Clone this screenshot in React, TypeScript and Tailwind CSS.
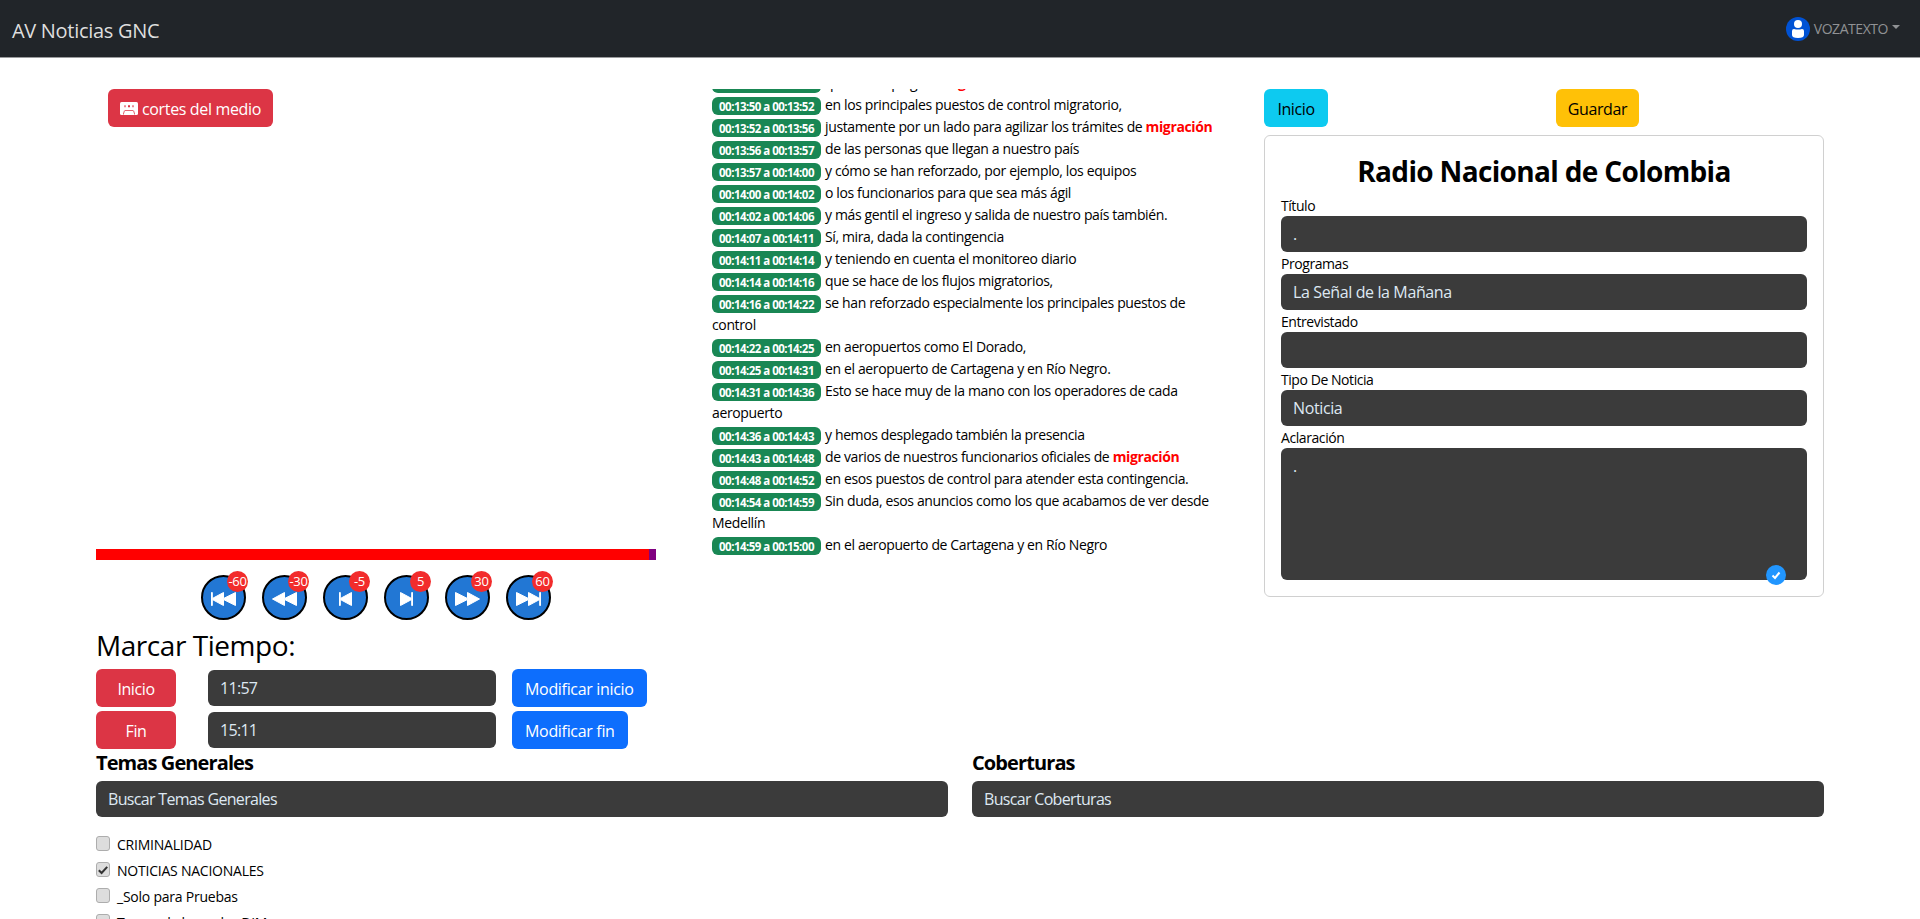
import { ReactNode } from "react";

const cues: [string, ReactNode][] = [
  ["00:13:48 a 00:13:50", <>que se desplegará <b className="text-[#ff0000]">migración</b></>],
  ["00:13:50 a 00:13:52", "en los principales puestos de control migratorio,"],
  ["00:13:52 a 00:13:56", <>justamente por un lado para agilizar los trámites de <b className="text-[#ff0000]">migración</b></>],
  ["00:13:56 a 00:13:57", "de las personas que llegan a nuestro país"],
  ["00:13:57 a 00:14:00", "y cómo se han reforzado, por ejemplo, los equipos"],
  ["00:14:00 a 00:14:02", "o los funcionarios para que sea más ágil"],
  ["00:14:02 a 00:14:06", "y más gentil el ingreso y salida de nuestro país también."],
  ["00:14:07 a 00:14:11", "Sí, mira, dada la contingencia"],
  ["00:14:11 a 00:14:14", "y teniendo en cuenta el monitoreo diario"],
  ["00:14:14 a 00:14:16", "que se hace de los flujos migratorios,"],
  ["00:14:16 a 00:14:22", <>se han reforzado especialmente los principales puestos de<br />control</>],
  ["00:14:22 a 00:14:25", "en aeropuertos como El Dorado,"],
  ["00:14:25 a 00:14:31", "en el aeropuerto de Cartagena y en Río Negro."],
  ["00:14:31 a 00:14:36", <>Esto se hace muy de la mano con los operadores de cada<br />aeropuerto</>],
  ["00:14:36 a 00:14:43", "y hemos desplegado también la presencia"],
  ["00:14:43 a 00:14:48", <>de varios de nuestros funcionarios oficiales de <b className="text-[#ff0000]">migración</b></>],
  ["00:14:48 a 00:14:52", "en esos puestos de control para atender esta contingencia."],
  ["00:14:54 a 00:14:59", <>Sin duda, esos anuncios como los que acabamos de ver desde<br />Medellín</>],
  ["00:14:59 a 00:15:00", "en el aeropuerto de Cartagena y en Río Negro"],
];

const seeks = [
  { label: "-60", d: "M.5 .5h.8v6L12.500 .5v6L24.500 .5v13l-12-6v6L1.300 7.500v6H.5z" },
  { label: "-30", d: "M12.500 .5v6L24.500 .5v13l-12-6v6L.5 7z" },
  { label: "-5", d: "M6.500 .5h.8v6L18.500 .5v13L7.300 7.500v6h-.8z" },
  { label: "5", d: "M18.500 .5h-.8v6L6.500 .5v13l11.200-6v6h.8z" },
  { label: "30", d: "M12.500 .5v6L.5 .5v13l12-6v6L24.500 7z" },
  { label: "60", d: "M24.500 .5h-.8v6L12.500 .5v6L.5 .5v13l12-6v6l11.200-6v6h.8z" },
];

function Field({ label, value }: { label: string; value: string }) {
  return (
    <div className="mb-[1px]">
      <div className="h-[21px] text-sm leading-[21px] tracking-[-0.44px]">{label}</div>
      <div className="h-9 rounded-md bg-[#3b3b3b] px-3 leading-9 tracking-[-0.38px] text-[#dee8f2]">{value}</div>
    </div>
  );
}

function TimeRow({ name, time, action }: { name: string; time: string; action: string }) {
  return (
    <div className="mb-1 flex h-[38px] items-center">
      <button className="h-[38px] w-20 rounded-md bg-[#dc3545] pt-0.5 tracking-[-0.4px] text-white">{name}</button>
      <div className="ml-8 h-9 w-72 rounded-md bg-[#3b3b3b] px-3 leading-9 tracking-[-0.7px] text-[#dee8f2]">{time}</div>
      <button className="ml-4 h-[38px] rounded-md bg-[#0d6efd] px-[13px] pt-0.5 tracking-[-0.32px] text-white">{action}</button>
    </div>
  );
}

function Search({ title, text }: { title: string; text: string }) {
  return (
    <div className="flex-1">
      <h5 className="h-[30px] text-xl leading-6 font-bold tracking-[-0.9px]">{title}</h5>
      <div className="h-9 rounded-md bg-[#3b3b3b] px-3 leading-9 tracking-[-0.68px] text-[#dee8f2]">{text}</div>
    </div>
  );
}

function Check({ label, on }: { label: string; on?: boolean }) {
  return (
    <div className="flex h-[26px] items-start">
      <span className="mt-px flex h-[15px] w-[14px] items-center justify-center rounded-[3px] border border-[#adadad] bg-[#dddddd]">
        {on && (
          <svg width="10" height="10" viewBox="0 0 10 10" fill="none" stroke="#333" strokeWidth="2">
            <path d="M.8 5.200L3.600 8L9.200 1.800" />
          </svg>
        )}
      </span>
      <span className="ml-[7px] text-sm leading-[20px] tracking-[-0.23px]">{label}</span>
    </div>
  );
}

export default function App() {
  return (
    <div className="h-[919px] overflow-hidden bg-white font-['Open_Sans','Noto_Sans',sans-serif] text-base text-black">
      <header className="flex h-[58px] justify-between border-b border-[#9a9b9d] bg-[#212529]">
        <div className="ml-3 pt-4 text-xl leading-[30px] tracking-[-0.3px] text-[#dedede]">AV Noticias GNC</div>
        <div className="mr-[20px] flex h-[58px] items-center">
          <svg width="24" height="24" viewBox="0 0 24 24">
            <circle cx="12" cy="12" r="12" fill="#0052d4" />
            <circle cx="12" cy="7" r="4" fill="#fff" />
            <path d="M6 14q0-2 2-2q4 1 8 0q2 0 2 2v4q0 3-6 3t-6-3z" fill="#fff" />
          </svg>
          <span className="mb-[2px] ml-1 text-sm leading-[21px] tracking-[-0.45px] text-[#909294]">VOZATEXTO</span>
          <span className="mb-[5px] ml-[4px] border-x-4 border-t-4 border-x-transparent border-t-[#909294]" />
        </div>
      </header>

      <main className="px-24 pt-[31px]">
        <div className="flex h-[660px]">
          <section className="w-[560px]">
            <div className="h-[460px] pl-3">
              <button className="flex h-[38px] items-center rounded-md bg-[#dc3545] px-3 pt-0.5 text-white">
                <svg className="-mt-px" width="18" height="13" viewBox="0 0 18 13">
                  <path d="M1.500 0h15Q18 0 18 1.500v10Q18 13 16.500 13h-15Q0 13 0 11.500v-10Q0 0 1.500 0z" fill="#fff" />
                  <path d="M8 3.200h2v2H8zM5 8h8v.8H5zM4.800 8.500L3.800 12.500H3L4 8.500zM13.200 8.500l1 4h.8l-1-4z" fill="#dc3545" />
                  <path d="M4 3.200h2v2H4zM12 3.200h2v2h-2z" fill="#ea8a94" />
                </svg>
                <span className="ml-1 tracking-[-0.35px]">cortes del medio</span>
              </button>
            </div>
            <div className="flex h-[11px] bg-[#ff0000]">
              <div className="ml-auto w-[7px] bg-[#800080]" />
            </div>
            <div className="flex gap-4 pt-[15px] pl-[105px]">
              {seeks.map((s) => (
                <button key={s.label} className="relative flex h-[45px] w-[45px] items-center justify-center rounded-full border-2 border-black bg-[#2277d4]">
                  <svg className="mt-[3px]" width="25" height="14" viewBox="0 0 25 14" fill="#fff" stroke="#fff" strokeLinejoin="round">
                    <path d={s.d} />
                  </svg>
                  <span className="absolute -top-[6px] -right-[4px] flex h-[21px] w-[21px] items-center justify-center rounded-full bg-[#f22c2c] pt-px text-[13px] font-medium tracking-[-0.3px] text-white">
                    {s.label}
                  </span>
                </button>
              ))}
            </div>
            <h3 className="mt-[8px] mb-[7px] h-[34px] text-[28px] leading-[34px] font-medium tracking-[-0.45px]">Marcar Tiempo:</h3>
            <TimeRow name="Inicio" time="11:57" action="Modificar inicio" />
            <TimeRow name="Fin" time="15:11" action="Modificar fin" />
          </section>

          <section className="ml-14 h-[470px] w-[520px] overflow-hidden">
            <div className="-mt-[17px] text-sm leading-[22px] tracking-[-0.37px] whitespace-nowrap">
              {cues.map(([t, text]) => (
                <div key={t}>
                  <span className="mr-1 inline-flex h-[18px] w-[109px] items-center justify-center rounded-md bg-[#198754] align-middle text-[11.5px] leading-none font-bold tracking-[-0.53px] text-white">
                    {t}
                  </span>
                  {text}
                </div>
              ))}
            </div>
          </section>

          <section className="ml-8 w-[560px]">
            <div className="flex h-[38px]">
              <button className="w-16 rounded-md bg-[#0dcaf0] pt-0.5 tracking-[-0.4px]">Inicio</button>
              <button className="ml-[228px] w-[83px] rounded-md bg-[#ffc107] pt-0.5 tracking-[-0.4px]">Guardar</button>
            </div>
            <div className="relative mt-2 h-[462px] rounded-md border border-[#d0d0d0] px-4 pt-4">
              <h3 className="mb-[5px] h-[38px] text-center text-[28px] leading-[38px] font-bold tracking-[-0.66px]">Radio Nacional de Colombia</h3>
              <Field label="Título" value="." />
              <Field label="Programas" value="La Señal de la Mañana" />
              <Field label="Entrevistado" value="" />
              <Field label="Tipo De Noticia" value="Noticia" />
              <div className="h-[21px] text-sm leading-[21px] tracking-[-0.42px]">Aclaración</div>
              <div className="h-[132px] rounded-md bg-[#3b3b3b] px-3 pt-1.5 leading-6 text-[#dee8f2]">.</div>
              <svg className="absolute right-[37px] bottom-[11px]" width="20" height="20" viewBox="0 0 20 20">
                <circle cx="10" cy="10" r="10" fill="#2196ff" />
                <path d="M6.500 10.500l2.500 2.500 4.500-5.500" fill="none" stroke="#fff" strokeWidth="2" />
              </svg>
            </div>
          </section>
        </div>

        <div className="mt-[2px] flex gap-6">
          <Search title="Temas Generales" text="Buscar Temas Generales" />
          <Search title="Coberturas" text="Buscar Coberturas" />
        </div>
        <div className="mt-[18px]">
          <Check label="CRIMINALIDAD" />
          <Check label="NOTICIAS NACIONALES" on />
          <Check label="_Solo para Pruebas" />
          <Check label="Temas de las redes DIM" />
        </div>
      </main>
    </div>
  );
}
